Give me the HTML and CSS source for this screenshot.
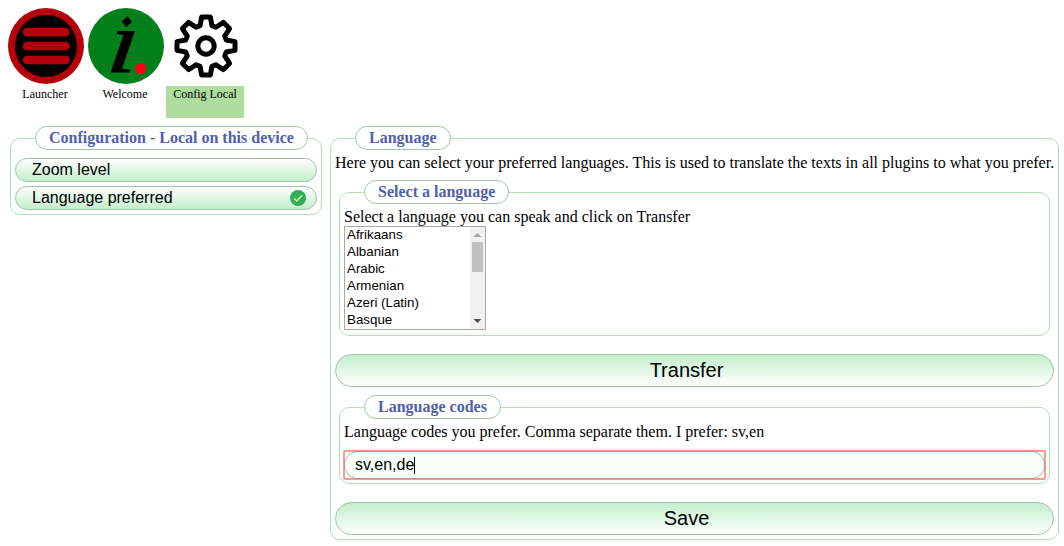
FILE: index.html
```html
<!DOCTYPE html>
<html lang="en">
<head>
<meta charset="utf-8">
<title>Config Local</title>
<link rel="stylesheet" href="styles.css">
</head>
<body>
<nav class="plugins">
  <a class="plugin">
    <svg class="plugin-icon" viewBox="0 0 76 76">
      <circle cx="38" cy="38" r="38" fill="#b5000c"/>
      <circle cx="38" cy="38" r="31" fill="#000"/>
      <path d="M19 24.3H57.5M19 38H57.5M19 52H57.5" stroke="#b5000c" stroke-width="8.6" stroke-linecap="round"/>
    </svg>
    <span class="plugin-label">Launcher</span>
  </a>
  <a class="plugin">
    <svg class="plugin-icon" viewBox="0 0 76 76">
      <circle cx="38" cy="38" r="38" fill="#047f1c"/>
      <text class="info-letter" transform="translate(17.5 64) skewX(-7) scale(1.25 1)">ı</text>
      <path d="M39.7 8.3L43.8 14L38.3 19L33.6 13.5Z" fill="#000"/>
      <circle cx="52.6" cy="60.6" r="5.7" fill="#ff0015"/>
    </svg>
    <span class="plugin-label">Welcome</span>
  </a>
  <a class="plugin">
    <svg class="plugin-icon" viewBox="-114 -114 228 228">
      <g fill="none" stroke="#000" stroke-width="15" stroke-linejoin="round">
        <path d="M-13 -87L13 -87L18 -61L29.7 -56.2L52.3 -70.7L70.7 -52.3L56.2 -29.7L61 -18L87 -13L87 13L61 18L56.2 29.7L70.7 52.3L52.3 70.7L29.7 56.2L18 61L13 87L-13 87L-18 61L-29.7 56.2L-52.3 70.7L-70.7 52.3L-56.2 29.7L-61 18L-87 13L-87 -13L-61 -18L-56.2 -29.7L-70.7 -52.3L-52.3 -70.7L-29.7 -56.2L-18 -61Z"/>
        <circle r="24.5"/>
      </g>
    </svg>
    <span class="plugin-label selected">Config Local</span>
  </a>
</nav>
<main class="content">
  <fieldset class="group menu">
    <legend>Configuration - Local on this device</legend>
    <button class="menu-item">Zoom level</button>
    <button class="menu-item">Language preferred
      <svg class="check" viewBox="0 0 16 16"><circle cx="8" cy="8" r="8" fill="#35ac5c"/><path d="M4 8.4L6.8 11L12.2 5.2" fill="none" stroke="#c5f59b" stroke-width="1.5"/></svg>
    </button>
  </fieldset>
  <fieldset class="group settings">
    <legend>Language</legend>
    <p>Here you can select your preferred languages. This is used to translate the texts in all plugins to what you prefer.</p>
    <fieldset class="group inner picker">
      <legend>Select a language</legend>
      <p>Select a language you can speak and click on Transfer</p>
      <div class="list">
        <ul>
          <li>Afrikaans</li><li>Albanian</li><li>Arabic</li><li>Armenian</li><li>Azeri (Latin)</li><li>Basque</li>
        </ul>
        <div class="scrollbar">
          <svg viewBox="0 0 15 15"><path d="M3.5 10L7.5 6L11.5 10Z" fill="#a3a3a3"/></svg>
          <div class="thumb"></div>
          <svg class="down" viewBox="0 0 15 15"><path d="M3.5 5L7.5 9L11.5 5Z" fill="#505050"/></svg>
        </div>
      </div>
    </fieldset>
    <button class="action">Transfer</button>
    <fieldset class="group inner codes">
      <legend>Language codes</legend>
      <p>Language codes you prefer. Comma separate them. I prefer: sv,en</p>
      <div class="focus-ring"><div class="field">sv,en,de<span class="caret"></span></div></div>
    </fieldset>
    <button class="action">Save</button>
  </fieldset>
</main>
</body>
</html>
```

FILE: styles.css
```css
* { box-sizing: border-box; }
body {
  margin: 0;
  padding: 8px 5px 0 6px;
  background: #fff;
  color: #000;
  font: 16px/18px "Liberation Serif", serif;
}
p { margin: 0; white-space: nowrap; }
.plugins { display: flex; gap: 2px; height: 118px; }
.plugin { width: 78px; }
.plugin-icon { display: block; width: 76px; height: 76px; margin-left: 2px; }
.plugin-label {
  display: block;
  height: 32px;
  margin-top: 2px;
  padding-top: 1px;
  font-size: 12px;
  line-height: 14px;
  text-align: center;
}
.selected { background: #afdc9f; }
.info-letter {
  font: italic 88px "Liberation Serif", serif;
  stroke: #000;
  stroke-width: 1px;
}
svg { overflow: visible; }

.content { display: flex; align-items: flex-start; gap: 8px; padding-left: 4px; }
.group {
  min-width: 0;
  margin: 0;
  padding: 4px;
  border: 1px solid #b4dcbc;
  border-radius: 10px;
}
legend {
  height: 24px;
  margin-left: 20px;
  padding: 0 13px;
  border: 1px solid #a0c8a8;
  border-radius: 12px;
  background: #fff;
  color: #5060b0;
  font-weight: bold;
  line-height: 22px;
}
.menu { width: 312px; height: 89px; padding-top: 8px; }
.settings { width: 729px; height: 414px; }
.settings > p { letter-spacing: 0.005px; }
.inner { margin: 0 4px; }
.picker { height: 156px; margin-top: 8px; }
.codes { height: 89px; margin-top: 8px; }

button {
  width: 100%;
  border: 1px solid #a0c4a8;
  color: #000;
  font-family: "Liberation Sans", sans-serif;
}
.menu-item {
  display: flex;
  align-items: center;
  justify-content: space-between;
  height: 24px;
  margin: 0 0 4px;
  padding: 0 10px 0 16px;
  border-radius: 12px;
  background: linear-gradient(#fff, #c4eecb);
  font-size: 16px;
}
.check { width: 16px; height: 16px; }
.action {
  display: block;
  height: 33px;
  margin: 18px 0 0;
  padding: 0 16px 1px 0;
  border-radius: 17px;
  background: linear-gradient(#c4eecb, #fff);
  font-size: 20px;
}

.list {
  display: flex;
  justify-content: space-between;
  width: 142px;
  height: 104px;
  border: 1px solid #a9a9a9;
  font: 13.33px/17px "Liberation Sans", sans-serif;
}
.list ul { margin: 0; padding: 0 0 0 2px; list-style: none; }
.list li { height: 17px; line-height: 16px; }
.scrollbar { display: flex; flex-direction: column; width: 15px; background: #f1f1f1; }
.scrollbar svg { width: 15px; height: 15px; }
.scrollbar .down { margin-top: auto; }
.thumb { width: 11px; height: 30px; margin-left: 2px; background: #c1c1c1; }

.focus-ring {
  height: 30px;
  margin: 9px -1px 0;
  border: 2px solid #f99c8c;
  border-radius: 2px;
}
.field {
  display: flex;
  align-items: center;
  height: 28px;
  margin: -1px;
  padding-left: 10px;
  border: 1px solid #80808080;
  border-radius: 14px;
  background: #f5fff8;
  background-clip: padding-box;
  font: 16px/18px "Liberation Sans", sans-serif;
}
.caret { width: 1px; height: 17px; background: #000; }
```
